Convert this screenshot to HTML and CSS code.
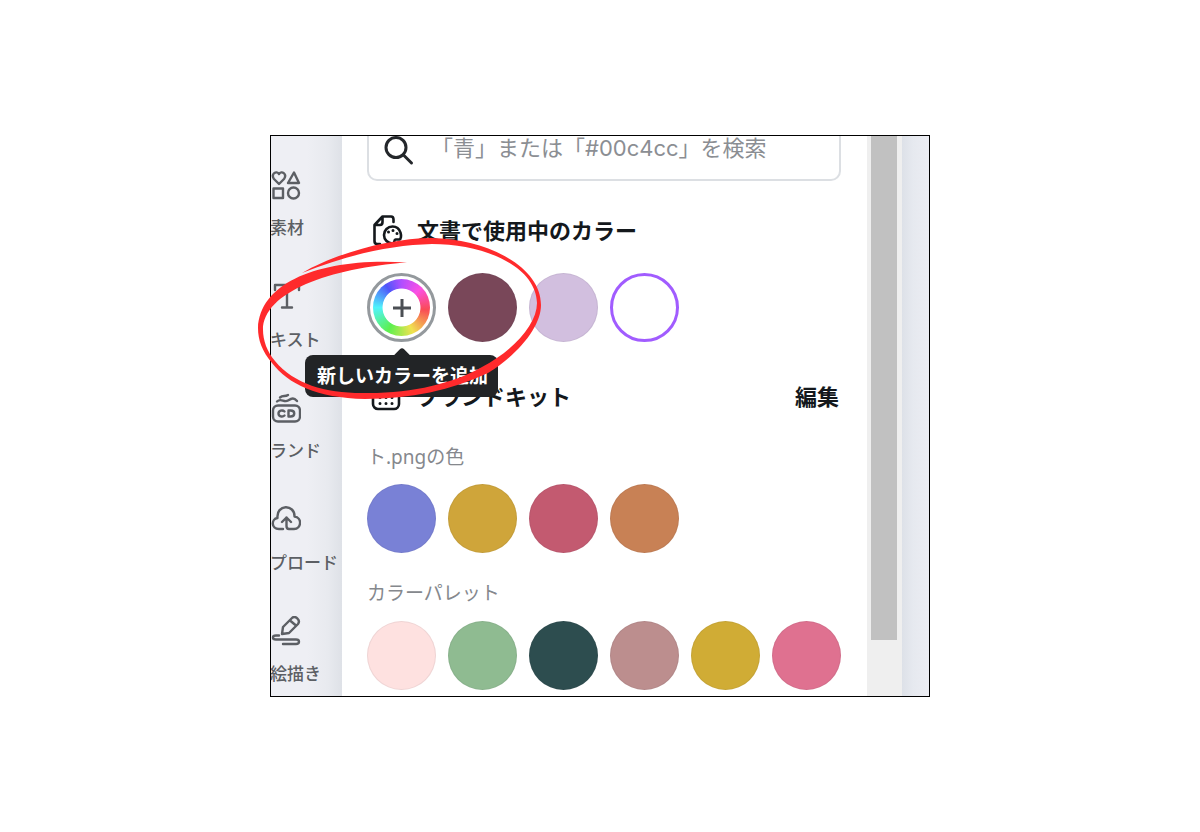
FILE: index.html
```html
<!DOCTYPE html>
<html lang="ja">
<head>
<meta charset="utf-8">
<meta name="viewport" content="width=device-width, initial-scale=1">
<title>カラー</title>
<link rel="stylesheet" href="styles.css">
</head>
<body>
<div class="stage">
  <div class="frame">
    <nav class="sidebar" aria-label="メニュー">
      <a class="nav-item" href="#">
        <svg class="nav-icon" viewBox="0 0 30 30"><path d="M8 14 3 9C-.5 4 5.500 0 8 4c2.500-4 8.500 0 5 5zM23 2.500 28 13H17zM2.500 18.500h9.500v9.500H2.500z"/><circle cx="22.500" cy="23" r="5.500"/></svg>
        <span class="nav-label">素材</span>
      </a>
      <a class="nav-item" href="#">
        <svg class="nav-icon" viewBox="0 0 30 30"><path d="M4 8V3h24v5M16 3v22.500M11 25.500h10"/></svg>
        <span class="nav-label">キスト</span>
      </a>
      <a class="nav-item" href="#">
        <svg class="nav-icon" viewBox="0 0 30 30"><rect x="2" y="12.500" width="27" height="16" rx="5"/><path d="M6 8.500C10 4.500 13 10 17 7.500s6-3 9 .5M9 4.500c3-2.500 5-.5 8-2.500"/><path d="M13.500 18.500c-2-2-6-1-6 2s4 4 6 2M17.500 17.500v6h2c5 0 5-6 0-6z"/></svg>
        <span class="nav-label">ランド</span>
      </a>
      <a class="nav-item" href="#">
        <svg class="nav-icon" viewBox="0 0 30 30"><path d="M12 24H8c-8 0-8-10-1.500-11C5-1 24-1 23.500 11.500c8 1 7 12.500-.500 12.500h-5c-2 0-2.500-1-2.500-3v-8.500M11 17l4.500-4.500L20 17"/></svg>
        <span class="nav-label">プロード</span>
      </a>
      <a class="nav-item" href="#">
        <svg class="nav-icon" viewBox="0 0 30 30"><path d="m11 18 1-7 9-9c3-3 9 2 6 6l-9 9zM19 4.500l6 5M8 19.500H5c-4 0-4 4 0 4h20c4 0 4 4.500 0 4.500H12"/></svg>
        <span class="nav-label">絵描き</span>
      </a>
    </nav>

    <main class="panel">
      <label class="search">
        <svg class="search-icon" viewBox="0 0 30 30"><circle cx="12" cy="11.500" r="10"/><path d="m19.500 19 8 8"/></svg>
        <input class="search-input" type="text" aria-label="カラーを検索" placeholder="「青」または「#00c4cc」を検索">
      </label>

      <section class="used">
        <header class="heading">
          <svg class="heading-icon" viewBox="0 0 32 32"><path d="M9 30H6c-2 0-2.500-1-2.500-3V11l8-8.500H20c2 0 2.500 1 2.500 3V8M3.500 11H9c2 0 2.500-1 2.500-3V2.500"/><path d="M21.500 12.500a8.500 8.500 0 1 0 0 17c3 0 1-4 3-4h4c3-1 2-13-7-13z"/><path class="dots" d="M17.500 18v.1M22 16.500v.1M26 19.500v.1"/></svg>
          <h2 class="heading-text">文書で使用中のカラー</h2>
        </header>
        <div class="swatches">
          <div class="add">
            <button class="add-button" type="button" aria-describedby="add-tip" aria-label="新しいカラーを追加">
              <span class="wheel"><svg class="plus" viewBox="0 0 20 20"><path d="M10 1v18M1 10h18"/></svg></span>
            </button>
            <div class="tooltip" id="add-tip" role="tooltip">新しいカラーを追加</div>
          </div>
          <button class="swatch plum" type="button" aria-label="#794759"></button>
          <button class="swatch lilac" type="button" aria-label="#d2bfdf"></button>
          <button class="swatch white" type="button" aria-label="#ffffff"></button>
        </div>
      </section>

      <section class="brand">
        <header class="heading">
          <svg class="heading-icon" viewBox="0 0 32 32"><rect x="2" y="11" width="26" height="18" rx="5"/><path d="M6 7c6-6 9 2 19-2"/><path class="dots" d="M9 17.500v.1M15 17.500v.1M21 17.500v.1M9 23.500v.1M15 23.500v.1M21 23.500v.1"/></svg>
          <h2 class="heading-text">ブランドキット</h2>
          <button class="edit" type="button">編集</button>
        </header>
        <h3 class="group-title first">ト.pngの色</h3>
        <div class="swatches">
          <button class="swatch blue" type="button" aria-label="#7981d6"></button>
          <button class="swatch gold" type="button" aria-label="#cfa53a"></button>
          <button class="swatch rose" type="button" aria-label="#c35a70"></button>
          <button class="swatch orange" type="button" aria-label="#c88155"></button>
        </div>
        <h3 class="group-title">カラーパレット</h3>
        <div class="swatches">
          <button class="swatch blush" type="button" aria-label="#fee1e0"></button>
          <button class="swatch green" type="button" aria-label="#8fbb91"></button>
          <button class="swatch teal" type="button" aria-label="#2d4d4f"></button>
          <button class="swatch mauve" type="button" aria-label="#bc8e8e"></button>
          <button class="swatch mustard" type="button" aria-label="#d0ac35"></button>
          <button class="swatch pink" type="button" aria-label="#df7190"></button>
        </div>
      </section>
    </main>
    <div class="scrollbar"><div class="thumb"></div></div>
    <div class="canvas-edge"></div>
  </div>
  <svg class="marker" viewBox="255 230 290 175" aria-hidden="true"><path d="M302 273C334 254 390 238 432 238C486 239 541 266 541 305C541 326 520 353 488 373C452 390 410 399 365 399C317 398 288 384 272 363C262 351 258 340 258 328C260 280 325 257 407 262.500C330 268 263 292 263 330C263 340 267 352 275 361C294 384 325 393 362 393C410 394 452 384 482 367C514 350 537 324 537 303C536 266 484 244 432 244C392 245 350 254 302 273Z"/></svg>
</div>
</body>
</html>
```
FILE: styles.css
```css
* {
  box-sizing: border-box;
}

body {
  margin: 0;
  min-height: 100vh;
  display: flex;
  align-items: center;
  justify-content: center;
  background: #fff;
  color: #14181c;
  font-family: "Noto Sans", "Noto Sans CJK JP", sans-serif;
}

button,
input {
  font: inherit;
  color: inherit;
}

button {
  padding: 0;
  border: 0;
  background: none;
  cursor: pointer;
}

h2,
h3 {
  margin: 0;
}

svg {
  fill: none;
  stroke: currentColor;
  stroke-linecap: round;
  stroke-linejoin: round;
}

.stage {
  position: relative;
  width: 55%;
}

.frame {
  display: flex;
  overflow: hidden;
  border: 1px solid #000;
  background: #fff;
}

.sidebar {
  flex: 0 0 71px;
  display: flex;
  flex-direction: column;
  justify-content: space-between;
  padding: 34px 0 10px;
  background: linear-gradient(90deg, #eeeff4 50%, #e8eaef 80%, #dee1e7);
}

.nav-item {
  display: flex;
  flex-direction: column;
  gap: 16px;
  color: #5c5f64;
  text-decoration: none;
}

.nav-icon {
  width: 30px;
  height: 30px;
  stroke-width: 2.4;
}

.nav-label {
  margin-left: -1px;
  font-size: 17px;
  font-weight: 500;
  line-height: 24px;
  white-space: nowrap;
}

.panel {
  flex: 1;
  min-width: 0;
  padding: 0 26px 6px 25px;
}

.search {
  display: flex;
  align-items: flex-start;
  gap: 17px;
  height: 45px;
  padding-left: 15px;
  border: 2px solid #dcdfe3;
  border-top: 0;
  border-radius: 0 0 10px 10px;
}

.search-icon {
  flex: none;
  width: 30px;
  height: 30px;
  color: #24272b;
  stroke-width: 3;
}

.search-input {
  flex: 1;
  min-width: 0;
  height: 24px;
  padding: 0;
  border: 0;
  outline: 0;
  background: none;
  font-family: Inter, "Noto Sans CJK JP", sans-serif;
  font-size: 22px;
  line-height: 24px;
}

.search-input::placeholder {
  color: #8b8e93;
  opacity: 1;
}

.used {
  margin-top: 31px;
}

.brand {
  margin-top: 36px;
}

.heading {
  display: flex;
  align-items: center;
  height: 36px;
}

.heading-icon {
  width: 32px;
  height: 32px;
  margin: 0 14px 0 4px;
  stroke-width: 2.6;
}

.dots {
  stroke-width: 3;
}

.heading-text,
.edit {
  font-size: 22px;
  font-weight: 700;
  line-height: 36px;
  white-space: nowrap;
}

.edit {
  margin: 0 2px 0 auto;
}

.group-title {
  margin: 26px 0 14px;
  color: #85888d;
  font-size: 19px;
  font-weight: 400;
  line-height: 28px;
}

.group-title.first {
  margin-top: 29px;
  margin-bottom: 13px;
}

.swatches {
  display: grid;
  grid-template-columns: repeat(6, 1fr);
  gap: 12px;
}

.used .swatches {
  margin-top: 25px;
}

.swatch {
  aspect-ratio: 1;
  border: 1px solid rgba(60, 60, 80, 0.08);
  border-radius: 50%;
}

.plum { background: #794759; }
.lilac { background: #d2bfdf; }
.white { background: #fff; border: 3px solid #a15cff; }
.blue { background: #7981d6; }
.gold { background: #cfa53a; }
.rose { background: #c35a70; }
.orange { background: #c88155; }
.blush { background: #fee1e0; }
.green { background: #8fbb91; }
.teal { background: #2d4d4f; }
.mauve { background: #bc8e8e; }
.mustard { background: #d0ac35; }
.pink { background: #df7190; }

.add {
  position: relative;
  aspect-ratio: 1;
}

.add-button {
  width: 100%;
  height: 100%;
  padding: 3px;
  border: 3px solid #94999d;
  border-radius: 50%;
  background: #fff;
}

.wheel {
  display: flex;
  align-items: center;
  justify-content: center;
  width: 100%;
  height: 100%;
  border-radius: 50%;
  background:
    radial-gradient(circle closest-side, #fff 65%, transparent 68%),
    conic-gradient(#b04fff, #fc50e4 45deg, #f94b55 95deg, #f0e24f 155deg, #5cf04f 210deg, #50f3fb 270deg, #4f55fa 325deg, #b04fff);
}

.plus {
  width: 20px;
  height: 20px;
  color: #4b4f54;
  stroke-width: 3;
  stroke-linecap: butt;
}

.tooltip {
  position: absolute;
  top: 82px;
  left: -62px;
  z-index: 1;
  padding: 0 10px 0 12px;
  border-radius: 8px;
  background: #222426;
  color: #fff;
  font-size: 19px;
  font-weight: 700;
  line-height: 42px;
  white-space: nowrap;
}

.tooltip::before {
  content: "";
  position: absolute;
  top: -5px;
  left: 90px;
  width: 14px;
  height: 14px;
  border-radius: 3px;
  background: inherit;
  transform: rotate(45deg);
}

.scrollbar {
  flex: 0 0 35px;
  padding: 0 5px 0 4px;
  background: #efefef;
}

.thumb {
  height: 90%;
  background: #c1c1c1;
}

.canvas-edge {
  flex: 0 0 27px;
  background: linear-gradient(90deg, #dde1e8, #e6e9ef 40%, #ecedf3);
}

.marker {
  position: absolute;
  top: 95px;
  left: -15px;
  z-index: 2;
  width: 290px;
  height: 175px;
  fill: #ff2a2c;
  stroke: none;
  pointer-events: none;
}
```
